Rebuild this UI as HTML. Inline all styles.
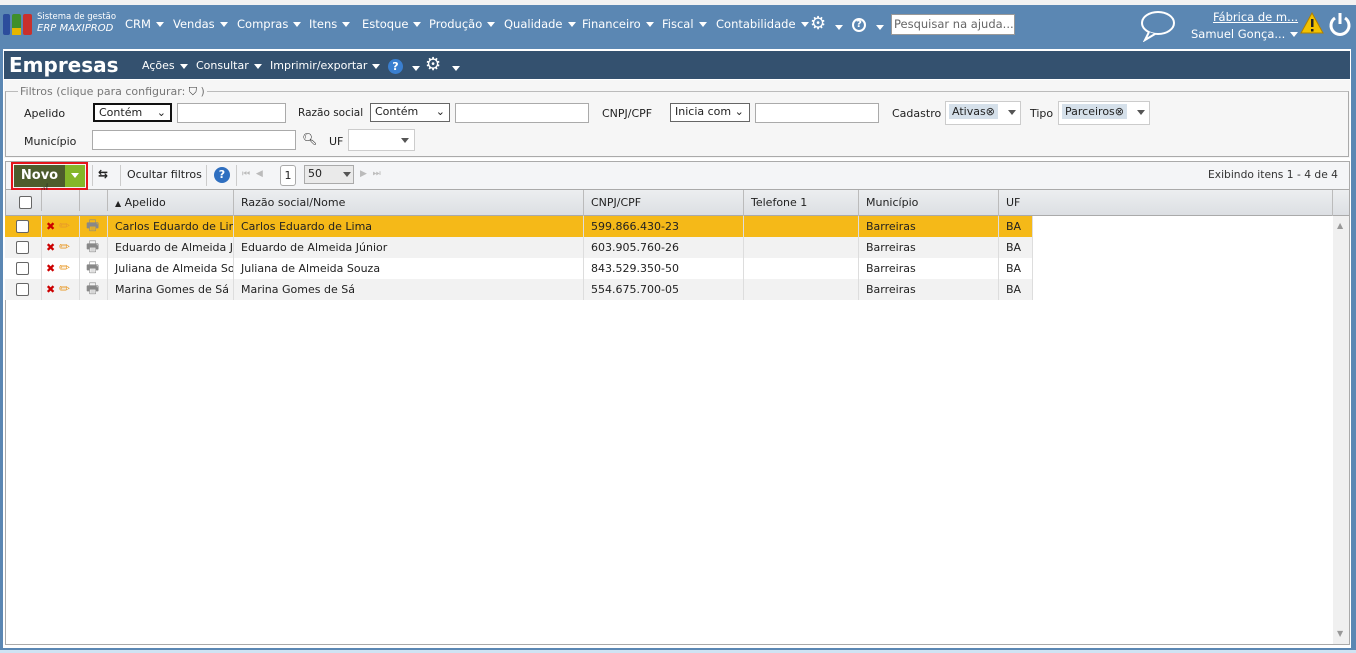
<!DOCTYPE html>
<html><head><meta charset="utf-8"><style>
*{box-sizing:border-box;margin:0;padding:0}
body{width:1356px;height:653px;position:relative;overflow:hidden;background:#fff;font-family:"DejaVu Sans","Liberation Sans",sans-serif;font-size:11px;color:#222}
.a{position:absolute;white-space:nowrap}
.nav{left:0;top:5px;width:1356px;height:42px;background:#5b87b3}
.m{color:#fff;font-size:11.5px;top:17px}
.tri{display:inline-block;width:0;height:0;border-left:4px solid transparent;border-right:4px solid transparent;border-top:5px solid #fff;vertical-align:middle;margin-left:5px}
.trid{border-top-color:#555}
.inp{background:#fff;border:1px solid #aaa;height:20px}
.sel{background:#fff;border:1px solid #666;height:19px;font-size:11px;padding:1px 4px}
.lbl{font-size:11px}
.row{left:5px;width:1028px;height:21px}
.cell{position:absolute;top:0;height:21px;line-height:21px;padding-left:7px;overflow:hidden;border-right:1px solid #ddd;font-size:11px}
.cb{position:absolute;left:11px;top:4px;width:13px;height:13px;border:1px solid #666;border-radius:2px;background:#fff}
</style></head><body>
<div class="a nav"></div>
<div class="a" style="left:0;top:0;width:1356px;height:5px;background:#f2f2f2"></div>
<div class="a" style="left:3px;top:14px;width:7px;height:21px;background:#2c4d9c;border-radius:2px"></div>
<div class="a" style="left:12px;top:14px;width:9px;height:21px;background:#3f8f2a;border-radius:2px"></div>
<div class="a" style="left:12px;top:28px;width:9px;height:7px;background:#e6b600"></div>
<div class="a" style="left:23px;top:14px;width:9px;height:21px;background:#c9302c;border-radius:2px"></div>
<div class="a" style="left:37px;top:12px;color:#fff;font-size:8.5px">Sistema de gestão</div>
<div class="a" style="left:37px;top:23px;color:#fff;font-size:10px;font-style:italic">ERP MAXIPROD</div>
<div class="a m" style="left:125px">CRM<span class="tri"></span></div>
<div class="a m" style="left:173px">Vendas<span class="tri"></span></div>
<div class="a m" style="left:237px">Compras<span class="tri"></span></div>
<div class="a m" style="left:309px">Itens<span class="tri"></span></div>
<div class="a m" style="left:362px">Estoque<span class="tri"></span></div>
<div class="a m" style="left:429px">Produção<span class="tri"></span></div>
<div class="a m" style="left:504px">Qualidade<span class="tri"></span></div>
<div class="a m" style="left:582px">Financeiro<span class="tri"></span></div>
<div class="a m" style="left:662px">Fiscal<span class="tri"></span></div>
<div class="a m" style="left:716px">Contabilidade<span class="tri"></span></div>
<div class="a m" style="left:810px;top:13px;font-size:18px">⚙</div>
<div class="a" style="left:835px;top:20px"><span class="tri" style="margin:0"></span></div>
<div class="a" style="left:852px;top:18px;width:14px;height:14px;border:2px solid #fff;border-radius:50%;color:#fff;font-size:10px;line-height:10px;text-align:center;font-weight:bold">?</div>
<div class="a" style="left:876px;top:20px"><span class="tri" style="margin:0"></span></div>
<div class="a" style="left:891px;top:14px;width:124px;height:21px;background:#fff;border:1px solid #999;color:#666;font-size:11.5px;padding:2px 2px;overflow:hidden">Pesquisar na ajuda...</div>
<svg class="a" style="left:1139px;top:10px" width="38" height="32"><ellipse cx="19" cy="13" rx="16" ry="11" fill="none" stroke="#fff" stroke-width="2"/><path d="M10 22 L6 30 L16 24" fill="#5b87b3" stroke="#fff" stroke-width="2"/></svg>
<div class="a" style="left:1213px;top:10px;color:#fff;font-size:11.5px;text-decoration:underline">Fábrica de m...</div>
<div class="a" style="left:1191px;top:27px;color:#fff;font-size:11.5px">Samuel Gonça...<span class="tri"></span></div>
<svg class="a" style="left:1300px;top:12px" width="24" height="22"><path d="M12 1 L23 21 L1 21 Z" fill="#f2c200" stroke="#b08000"/><rect x="11" y="7" width="2.5" height="8" fill="#222"/><rect x="11" y="17" width="2.5" height="2.5" fill="#222"/></svg>
<svg class="a" style="left:1328px;top:11px" width="24" height="26"><path d="M7 7 A9 9 0 1 0 17 7" fill="none" stroke="#fff" stroke-width="3"/><line x1="12" y1="2" x2="12" y2="13" stroke="#fff" stroke-width="3"/></svg>

<div class="a" style="left:0;top:47px;width:1356px;height:606px;background:#5b87b3"></div>
<div class="a" style="left:3px;top:49px;width:1348px;height:599px;background:#fff"></div>
<div class="a" style="left:0;top:650px;width:1356px;height:3px;background:#cfe3f3"></div>
<div class="a" style="left:4px;top:51px;width:1346px;height:28px;background:#34516f"></div>
<div class="a" style="left:9px;top:53px;color:#fff;font-size:20px;font-weight:bold">Empresas</div>
<div class="a" style="left:142px;top:59px;color:#fff;font-size:11px">Ações<span class="tri"></span></div>
<div class="a" style="left:196px;top:59px;color:#fff;font-size:11px">Consultar<span class="tri"></span></div>
<div class="a" style="left:270px;top:59px;color:#fff;font-size:11px">Imprimir/exportar<span class="tri"></span></div>
<div class="a" style="left:388px;top:59px;width:15px;height:15px;border-radius:50%;background:#3a7fd0;color:#fff;font-size:11px;font-weight:bold;text-align:center;line-height:15px">?</div>
<div class="a" style="left:412px;top:61px"><span class="tri" style="margin:0"></span></div>
<div class="a" style="left:425px;top:54px;color:#fff;font-size:18px">⚙</div>
<div class="a" style="left:452px;top:61px"><span class="tri" style="margin:0"></span></div>

<div class="a" style="left:4px;top:80px;width:1346px;height:78px;background:#f6f6f6"></div>
<div class="a" style="left:5px;top:91px;width:1344px;height:66px;border:1px solid #aaa;border-top-color:#bbb"></div>
<div class="a" style="left:18px;top:85px;background:#f6f6f6;color:#777;font-size:11px;padding:0 2px">Filtros (clique para configurar: <span style="color:#333">⛉</span> )</div>
<div class="a lbl" style="left:24px;top:107px">Apelido</div>
<div class="a sel" style="left:93px;top:103px;width:79px;border:2px solid #111">Contém <span style="float:right">⌄</span></div>
<div class="a inp" style="left:177px;top:103px;width:109px"></div>
<div class="a lbl" style="left:298px;top:107px;font-size:10.5px">Razão social</div>
<div class="a sel" style="left:370px;top:103px;width:80px">Contém <span style="float:right">⌄</span></div>
<div class="a inp" style="left:455px;top:103px;width:134px"></div>
<div class="a lbl" style="left:602px;top:107px">CNPJ/CPF</div>
<div class="a sel" style="left:670px;top:103px;width:80px">Inicia com ⌄</div>
<div class="a inp" style="left:755px;top:103px;width:124px"></div>
<div class="a lbl" style="left:892px;top:107px">Cadastro</div>
<div class="a inp" style="left:945px;top:101px;width:76px;height:24px;border-color:#ccc"></div>
<div class="a" style="left:949px;top:104px;background:#d5e0ea;padding:1px 3px;font-size:11px">Ativas⊗</div>
<div class="a" style="left:1008px;top:110px"><span class="tri trid" style="margin:0;vertical-align:top"></span></div>
<div class="a lbl" style="left:1030px;top:107px">Tipo</div>
<div class="a inp" style="left:1058px;top:101px;width:92px;height:24px;border-color:#ccc"></div>
<div class="a" style="left:1062px;top:104px;background:#d5e0ea;padding:1px 3px;font-size:11px">Parceiros⊗</div>
<div class="a" style="left:1137px;top:110px"><span class="tri trid" style="margin:0;vertical-align:top"></span></div>
<div class="a lbl" style="left:24px;top:135px">Município</div>
<div class="a inp" style="left:92px;top:130px;width:204px"></div>
<div class="a" style="left:302px;top:132px;font-size:12px">🔍︎</div>
<div class="a lbl" style="left:329px;top:135px">UF</div>
<div class="a inp" style="left:348px;top:129px;width:67px;height:22px;border-color:#ccc"></div>
<div class="a" style="left:401px;top:138px"><span class="tri trid" style="margin:0;vertical-align:top"></span></div>

<div class="a" style="left:5px;top:161px;width:1345px;height:29px;background:#f4f5f7;border:1px solid #aaa"></div>
<div class="a" style="left:11px;top:162px;width:77px;height:28px;border:2px solid #e4141c"></div>
<div class="a" style="left:14px;top:165px;width:51px;height:22px;background:#4d5c2c;color:#fff;font-weight:bold;font-size:13px;line-height:22px;text-align:center">Novo</div>
<div class="a" style="left:65px;top:165px;width:20px;height:22px;background:#84b629"><span class="tri" style="margin:8px 0 0 6px;border-top-color:#fff;vertical-align:top"></span></div>
<div class="a" style="left:40px;top:180px;font-size:16px">☝</div>
<div class="a" style="left:92px;top:165px;width:1px;height:21px;background:#ccc"></div>
<div class="a" style="left:98px;top:167px;font-size:12px;font-weight:bold">⇆</div>
<div class="a" style="left:120px;top:165px;width:1px;height:21px;background:#ccc"></div>
<div class="a" style="left:127px;top:168px;font-size:11px">Ocultar filtros</div>
<div class="a" style="left:206px;top:165px;width:1px;height:21px;background:#ccc"></div>
<div class="a" style="left:214px;top:167px;width:16px;height:16px;border-radius:50%;background:#2f6fc0;color:#fff;font-weight:bold;text-align:center;line-height:16px">?</div>
<div class="a" style="left:236px;top:165px;width:1px;height:21px;background:#ccc"></div>
<div class="a" style="left:242px;top:169px;color:#bbb;font-size:9px">⏮ &nbsp;◀</div>
<div class="a" style="left:280px;top:165px;width:16px;height:21px;border:1px solid #aaa;border-radius:3px;background:#fff;text-align:center;line-height:19px">1</div>
<div class="a" style="left:304px;top:165px;width:50px;height:19px;border:1px solid #aaa;background:#eaeaea;padding-left:3px;line-height:16px">50<span class="tri trid" style="margin-left:21px"></span></div>
<div class="a" style="left:360px;top:169px;color:#bbb;font-size:9px">▶ &nbsp;⏭</div>
<div class="a" style="left:1208px;top:168px;font-size:10.7px;color:#333">Exibindo itens 1 - 4 de 4</div>

<div class="a" style="left:5px;top:190px;width:1345px;height:455px;border:1px solid #aaa;border-top:none"></div>
<div class="a" style="left:6px;top:190px;width:1343px;height:26px;background:linear-gradient(#eceef0,#dcdfe3);border-bottom:1px solid #aaa"></div>
<div class="a" style="left:1333px;top:216px;width:16px;height:428px;background:#f0f0f0"></div>
<div class="a" style="left:1337px;top:221px;color:#999;font-size:8px">▲</div>
<div class="a" style="left:1337px;top:629px;color:#999;font-size:8px">▼</div>
<div class="a" style="left:5px;top:190px;width:1328px;height:26px">
 <div class="cb" style="left:14px;top:6px"></div>
 <div class="cell" style="left:36px;width:1px;padding:0;border-right:1px solid #bbb"></div>
 <div class="cell" style="left:74px;width:1px;padding:0;border-right:1px solid #bbb"></div>
 <div class="cell" style="left:102px;width:1px;padding:0;border-right:1px solid #bbb"></div>
 <div class="cell" style="left:103px;width:126px;height:26px;line-height:26px;border-right:1px solid #bbb"><span style="font-size:8px">▲</span> Apelido</div>
 <div class="cell" style="left:229px;width:350px;height:26px;line-height:26px;border-right:1px solid #bbb">Razão social/Nome</div>
 <div class="cell" style="left:579px;width:160px;height:26px;line-height:26px;border-right:1px solid #bbb">CNPJ/CPF</div>
 <div class="cell" style="left:739px;width:115px;height:26px;line-height:26px;border-right:1px solid #bbb">Telefone 1</div>
 <div class="cell" style="left:854px;width:140px;height:26px;line-height:26px;border-right:1px solid #bbb">Município</div>
 <div class="cell" style="left:994px;width:334px;height:26px;line-height:26px;border-right:1px solid #bbb">UF</div>
</div>

<div class="a row" style="top:216px;background:#f5b918">
 <div class="cb"></div><div class="cell" style="left:0;width:37px;padding:0"></div>
 <div class="cell" style="left:37px;width:38px;color:#c00;font-weight:bold;padding-left:4px">✖ <span style="color:#e89a2a;font-weight:normal;font-size:13px">✏</span></div>
 <div class="cell" style="left:75px;width:28px;color:#888;font-size:14px;padding-left:6px">🖶︎</div>
 <div class="cell" style="left:103px;width:126px">Carlos Eduardo de Lima</div>
 <div class="cell" style="left:229px;width:350px">Carlos Eduardo de Lima</div>
 <div class="cell" style="left:579px;width:160px">599.866.430-23</div>
 <div class="cell" style="left:739px;width:115px"></div>
 <div class="cell" style="left:854px;width:140px">Barreiras</div>
 <div class="cell" style="left:994px;width:34px">BA</div>
</div>
<div class="a row" style="top:237px;background:#f2f2f2">
 <div class="cb"></div><div class="cell" style="left:0;width:37px;padding:0"></div>
 <div class="cell" style="left:37px;width:38px;color:#c00;font-weight:bold;padding-left:4px">✖ <span style="color:#e89a2a;font-weight:normal;font-size:13px">✏</span></div>
 <div class="cell" style="left:75px;width:28px;color:#888;font-size:14px;padding-left:6px">🖶︎</div>
 <div class="cell" style="left:103px;width:126px">Eduardo de Almeida Júnior</div>
 <div class="cell" style="left:229px;width:350px">Eduardo de Almeida Júnior</div>
 <div class="cell" style="left:579px;width:160px">603.905.760-26</div>
 <div class="cell" style="left:739px;width:115px"></div>
 <div class="cell" style="left:854px;width:140px">Barreiras</div>
 <div class="cell" style="left:994px;width:34px">BA</div>
</div>
<div class="a row" style="top:258px;background:#fff">
 <div class="cb"></div><div class="cell" style="left:0;width:37px;padding:0"></div>
 <div class="cell" style="left:37px;width:38px;color:#c00;font-weight:bold;padding-left:4px">✖ <span style="color:#e89a2a;font-weight:normal;font-size:13px">✏</span></div>
 <div class="cell" style="left:75px;width:28px;color:#888;font-size:14px;padding-left:6px">🖶︎</div>
 <div class="cell" style="left:103px;width:126px">Juliana de Almeida Souza</div>
 <div class="cell" style="left:229px;width:350px">Juliana de Almeida Souza</div>
 <div class="cell" style="left:579px;width:160px">843.529.350-50</div>
 <div class="cell" style="left:739px;width:115px"></div>
 <div class="cell" style="left:854px;width:140px">Barreiras</div>
 <div class="cell" style="left:994px;width:34px">BA</div>
</div>
<div class="a row" style="top:279px;background:#f2f2f2">
 <div class="cb"></div><div class="cell" style="left:0;width:37px;padding:0"></div>
 <div class="cell" style="left:37px;width:38px;color:#c00;font-weight:bold;padding-left:4px">✖ <span style="color:#e89a2a;font-weight:normal;font-size:13px">✏</span></div>
 <div class="cell" style="left:75px;width:28px;color:#888;font-size:14px;padding-left:6px">🖶︎</div>
 <div class="cell" style="left:103px;width:126px">Marina Gomes de Sá</div>
 <div class="cell" style="left:229px;width:350px">Marina Gomes de Sá</div>
 <div class="cell" style="left:579px;width:160px">554.675.700-05</div>
 <div class="cell" style="left:739px;width:115px"></div>
 <div class="cell" style="left:854px;width:140px">Barreiras</div>
 <div class="cell" style="left:994px;width:34px">BA</div>
</div>
</body></html>
